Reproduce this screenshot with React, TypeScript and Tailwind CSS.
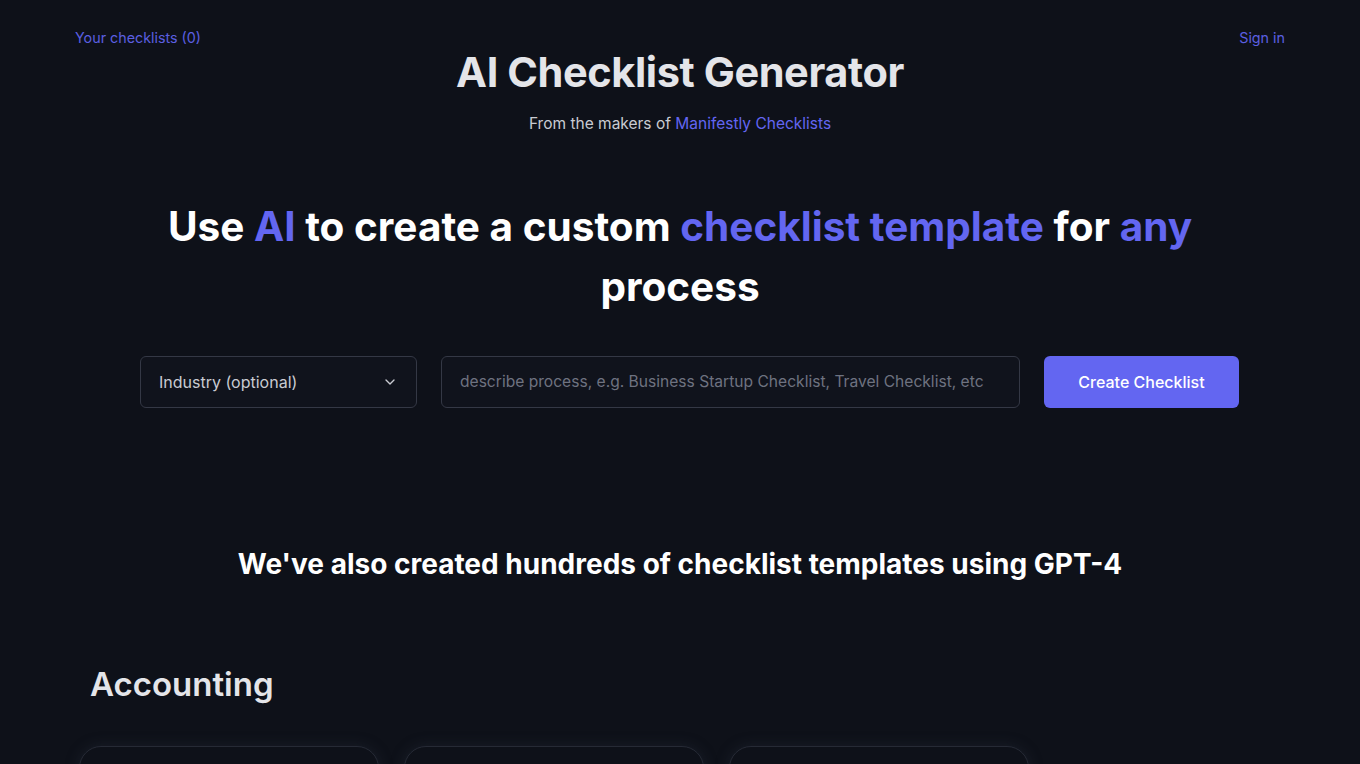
import { ChevronDown } from "lucide-react";

const FONT = { fontFamily: "Inter, 'Noto Sans', sans-serif" };

export default function App() {
  return (
    <div className="min-h-screen bg-[#0e1119] overflow-hidden" style={FONT}>
      {/* Top links */}
      <div className="flex justify-between px-[75px] pt-[28px] text-[14.3px] leading-[20px] text-[#5b5fe0]">
        <a href="#">Your checklists (0)</a>
        <a href="#">Sign in</a>
      </div>

      {/* Title */}
      <h1 className="text-center text-[41.5px] leading-[48px] font-bold text-[#e4e5e9] tracking-[-0.01em]">
        AI Checklist Generator
      </h1>
      <p className="mt-4 text-center text-[15.5px] leading-[24px] text-[#c9cbd2]">
        From the makers of <a href="#" className="text-[#6366f1]">Manifestly Checklists</a>
      </p>

      {/* Hero */}
      <h2 className="mt-[61px] mx-auto max-w-[1100px] text-center text-[40.5px] leading-[60px] font-bold text-white">
        Use <span className="text-[#6366f1]">AI</span> to create a custom{" "}
        <span className="text-[#6366f1]">checklist template</span> for{" "}
        <span className="text-[#6366f1]">any</span> process
      </h2>

      {/* Form */}
      <div className="mt-[39px] ml-[140px] flex gap-6">
        <div className="w-[277px] h-[52px] rounded-md border border-[#343845] bg-[#10131c] flex items-center justify-between pl-[18px] pr-[18px] text-[16px] text-[#c9cbd2]">
          <span>Industry (optional)</span>
          <ChevronDown size={16} strokeWidth={2} className="text-[#c9cbd2]" />
        </div>
        <div className="w-[579px] h-[52px] rounded-md border border-[#343845] bg-[#10131c] flex items-center px-[18px] text-[15.6px] text-[#6e7280]">
          describe process, e.g. Business Startup Checklist, Travel Checklist, etc
        </div>
        <button className="w-[195px] h-[52px] rounded-md bg-[#6366f1] text-white text-[16px] font-medium">
          Create Checklist
        </button>
      </div>

      {/* Templates */}
      <h3 className="mt-[138px] text-center text-[28px] leading-[36px] font-bold text-white">
        We've also created hundreds of checklist templates using GPT-4
      </h3>

      <h4 className="mt-[82px] ml-[90px] text-[33px] leading-[40px] font-semibold text-[#e4e5e9]">
        Accounting
      </h4>

      <div className="mt-[42px] ml-[79px] flex gap-[25px]">
        {[0, 1, 2].map((i) => (
          <div
            key={i}
            className="w-[300px] h-[160px] rounded-[22px] border border-[#262a35] bg-[#0e1119] shadow-[0_0_14px_rgba(40,46,60,0.45)]"
          />
        ))}
      </div>
    </div>
  );
}
